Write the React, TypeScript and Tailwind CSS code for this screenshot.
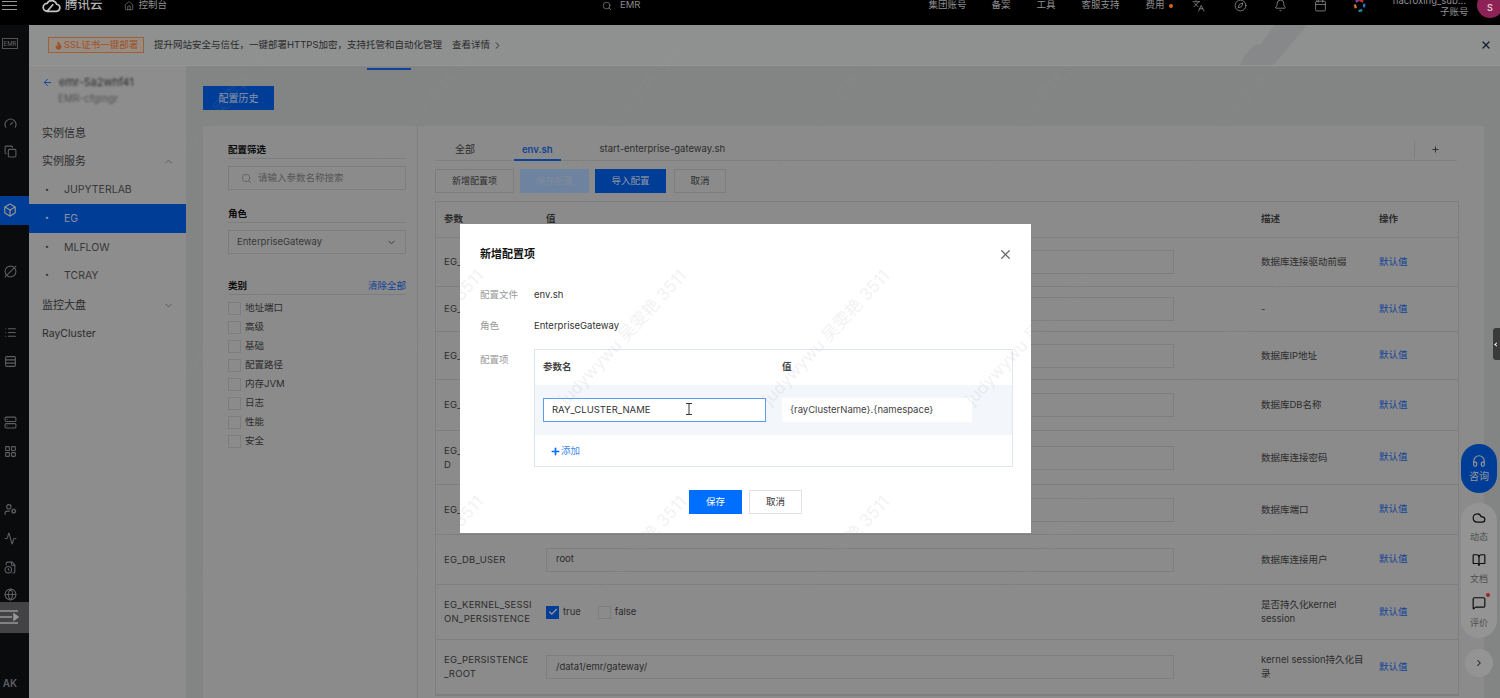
import {
  Activity,
  ArrowLeft,
  BookOpen,
  Bell,
  Box,
  Calendar,
  Check,
  ChevronDown,
  ChevronRight,
  ChevronUp,
  CircleSlash2,
  Cloud,
  Compass,
  Copy,
  FileClock,
  Flame,
  Gauge,
  Globe,
  Headphones,
  Home,
  Languages,
  LayoutGrid,
  List,
  MessageSquare,
  Plus,
  Rows3,
  Search,
  Server,
  UserCog,
  X,
} from 'lucide-react';

const FONT = 'font-["Inter","Noto_Sans_CJK_SC",sans-serif]';

const NAV_TOP = [
  { label: '集团账号', cls: 'ml-[288px]' },
  { label: '备案', cls: 'ml-[25px]' },
  { label: '工具', cls: 'ml-[26px]' },
  { label: '客服支持', cls: 'ml-[26px]' },
  { label: '费用', cls: 'ml-[26px]' },
];

const CATEGORIES = ['地址端口', '高级', '基础', '配置路径', '内存JVM', '日志', '性能', '安全'];

const ROWS = [
  { name: 'EG_DB_PREFIX', value: '', desc: '数据库连接驱动前缀', cls: 'h-[49px]' },
  { name: 'EG_DB_OPTIONS', value: '', desc: '-', cls: 'h-[45px]' },
  { name: 'EG_DB_HOST', value: '', desc: '数据库IP地址', cls: 'h-[48px]' },
  { name: 'EG_DB_NAME', value: '', desc: '数据库DB名称', cls: 'h-[51px]' },
  { name: 'EG_DB_PASSWORD', value: '', desc: '数据库连接密码', cls: 'h-[54px]' },
  { name: 'EG_DB_PORT', value: '', desc: '数据库端口', cls: 'h-[50px]' },
  { name: 'EG_DB_USER', value: 'root', desc: '数据库连接用户', cls: 'h-[50px]' },
  { name: 'EG_KERNEL_SESSION_PERSISTENCE', value: 'check', desc: '是否持久化kernel session', cls: 'h-[55px]' },
  { name: 'EG_PERSISTENCE_ROOT', value: '/data1/emr/gateway/', desc: 'kernel session持久化目录', cls: 'h-[55px]' },
];

const WATERMARKS = [99, 325, 551].flatMap((y) =>
  [129, 332, 535, 738, 941, 1144].map((x) => ({ x, y })),
);

const RailIcon = ({ children, cls }: { children: React.ReactNode; cls: string }) => (
  <div className={`flex items-center justify-center w-full pr-[9px] text-[#85888d] ${cls}`}>{children}</div>
);

const TopBar = () => (
  <header className="h-[25px] shrink-0 bg-black overflow-hidden text-[#8f8f8f] text-[9.5px]">
    <div className="flex items-center h-[11px] relative">
      <div className="w-[41px] pl-[2px] flex flex-col gap-[3px]">
        <span className="block w-[15px] h-[1px] bg-[#999]" />
        <span className="block w-[15px] h-[1px] bg-[#999]" />
        <span className="block w-[15px] h-[1px] bg-[#999]" />
      </div>
      <svg viewBox="0 0 24 16" className="w-[21px] h-[14px] text-[#c4c4c4]" fill="none" stroke="currentColor" strokeWidth="2">
        <path d="M7 14h10a4 4 0 0 0 1-8 6 6 0 0 0-11-1 4.500 4.500 0 0 0 0 9zM7 14l7-8" />
      </svg>
      <span className="ml-[3px] text-[12.5px] font-medium text-[#b4b4b4]">腾讯云</span>
      <Home className="ml-[21px] w-[10px] h-[10px]" strokeWidth={1.5} />
      <span className="ml-[5px]">控制台</span>
      <Search className="ml-[435px] w-[10px] h-[10px] text-[#777]" />
      <span className="ml-[8px] text-[#8a8a8a]">EMR</span>
      {NAV_TOP.map((item) => (
        <span key={item.label} className={item.cls}>
          {item.label}
        </span>
      ))}
      <span className="ml-[4px] w-[4px] h-[4px] rounded-full bg-[#d8641a]" />
      <Languages className="ml-[19px] w-[13px] h-[13px]" strokeWidth={1.5} />
      <Compass className="ml-[29px] w-[13px] h-[13px]" strokeWidth={1.5} />
      <Bell className="ml-[27px] w-[13px] h-[13px]" strokeWidth={1.5} />
      <Calendar className="ml-[27px] w-[13px] h-[13px]" strokeWidth={1.5} />
      <svg viewBox="0 0 14 14" className="ml-[26px] w-[13px] h-[13px]" fill="none" strokeWidth="2.500">
        <path d="M7 1l4 2" stroke="#c0392b" />
        <path d="M12 5l0 4" stroke="#2f6fd0" />
        <path d="M10 12l-4 1" stroke="#1f8fb0" />
        <path d="M3 10L2 6" stroke="#d07a2a" />
        <path d="M3 3l3-2" stroke="#8a3fa8" />
      </svg>
      <span className="absolute left-[1390px] -top-[6px] text-[9.5px] w-[76px] text-right">hacroxing_sub...</span>
      <span className="absolute left-[1440px] top-[5px] text-[9.5px]">子账号</span>
      <span className="absolute left-[1477px] -top-[8px] w-[26px] h-[26px] rounded-full bg-[#8c2256] flex items-center justify-center text-[9px] font-semibold text-[#e5c7d4] pt-[5px]">
        S
      </span>
    </div>
  </header>
);

const Rail = () => (
  <aside className="w-[29px] shrink-0 bg-[#0f1013] flex flex-col">
    <RailIcon cls="h-[38px]">
      <span className="border border-[#777] text-[6px] leading-[9px] px-[1px] text-[#999]">EMR</span>
    </RailIcon>
    <RailIcon cls="mt-[46px] h-[29px]"><Gauge size={13} /></RailIcon>
    <RailIcon cls="h-[29px]"><Copy size={13} /></RailIcon>
    <RailIcon cls="mt-[30px] h-[29px] bg-[#0058d8] text-[#d6d6d6]"><Box size={14} /></RailIcon>
    <RailIcon cls="mt-[32px] h-[29px]"><CircleSlash2 size={13} /></RailIcon>
    <RailIcon cls="mt-[33px] h-[29px]"><List size={13} /></RailIcon>
    <RailIcon cls="h-[29px]"><Rows3 size={13} /></RailIcon>
    <RailIcon cls="mt-[32px] h-[29px]"><Server size={13} /></RailIcon>
    <RailIcon cls="h-[29px]"><LayoutGrid size={13} /></RailIcon>
    <RailIcon cls="mt-[30px] h-[29px]"><UserCog size={13} /></RailIcon>
    <RailIcon cls="h-[29px]"><Activity size={13} /></RailIcon>
    <RailIcon cls="h-[29px]"><FileClock size={13} /></RailIcon>
    <RailIcon cls="h-[20px] pt-[6px]"><Globe size={13} /></RailIcon>
    <div className="h-[32px] bg-[#616165] text-[#d8d8d8] flex items-center">
      <svg viewBox="0 0 20 16" className="w-[20px] h-[16px]" fill="none" stroke="currentColor" strokeWidth="1.5">
        <path d="M0 2h18M0 8h12M0 14h18" />
        <path d="M14 5l4 3-4 3z" fill="currentColor" />
      </svg>
    </div>
    <RailIcon cls="mt-[36px] h-[29px] text-[10px] font-semibold">AK</RailIcon>
  </aside>
);

const Banner = () => (
  <div className="h-[41px] shrink-0 bg-[#cdcecf] border-b border-[#d6d6d7] relative overflow-hidden flex items-center pl-[19px] text-[9.5px] text-[#3c3c3c]">
    <span className="h-[16px] w-[96px] border border-[#e08a55] bg-[#dccabc] text-[#e0783c] flex items-center justify-center gap-[1px]">
      <Flame size={9} fill="currentColor" />
      SSL证书一键部署
    </span>
    <span className="ml-[10px]">提升网站安全与信任，一键部署HTTPS加密，支持托管和自动化管理</span>
    <span className="ml-[10px]">查看详情</span>
    <ChevronRight className="ml-[2px]" size={11} />
    <svg viewBox="0 0 120 41" className="absolute left-[1180px] top-0 w-[120px] h-[41px] text-[#c2c3c5]" fill="currentColor">
      <path d="M30 41q10-20 20-22q6 8 2 22z" />
      <path d="M36 41 66 0h32L64 41z" />
    </svg>
    <X className="absolute right-[8px] top-[14px] text-[#1c2b45]" size={12} strokeWidth={2.5} />
  </div>
);

const SubItem = ({ label }: { label: string }) => (
  <>
    <span className="w-[22px] pl-[3px] text-[7px]">•</span>
    {label}
  </>
);

const Sidebar = () => (
  <nav className="w-[157px] shrink-0 bg-[#cbcbcc] text-[10.5px] text-[#404040] pl-[13px]">
    <div className="flex items-center gap-[6px] h-[20px] mt-[6px] text-[#1560d8]">
      <ArrowLeft size={11} />
      <span className="blur-[1.2px] text-[#404040] text-[11px]">emr-5a2whf41</span>
    </div>
    <div className="h-[12px] ml-[16px] blur-[1.2px] text-[#707070] text-[10px] leading-[12px]">EMR-cfgmgr</div>
    <div className="h-[29px] mt-[14px] pt-[2px] flex items-center text-[11px]">实例信息</div>
    <div className="h-[28px] pt-[1px] flex items-center justify-between pr-[12px] text-[11px]">
      实例服务
      <ChevronUp size={11} className="text-[#777]" />
    </div>
    <div className="h-[29px] pt-[1px] flex items-center text-[#505050]">
      <SubItem label="JUPYTERLAB" />
    </div>
    <div className="h-[29px] -ml-[13px] pl-[13px] bg-[#0058d8] flex items-center text-[#c8d4e8]">
      <SubItem label="EG" />
    </div>
    <div className="h-[28px] pt-[1px] flex items-center text-[#505050]">
      <SubItem label="MLFLOW" />
    </div>
    <div className="h-[29px] flex items-center text-[#505050]">
      <SubItem label="TCRAY" />
    </div>
    <div className="h-[29px] pt-[1px] flex items-center justify-between pr-[12px] text-[11px]">
      监控大盘
      <ChevronDown size={11} className="text-[#777]" />
    </div>
    <div className="h-[29px] flex items-center">RayCluster</div>
  </nav>
);

const FilterColumn = () => (
  <div className="w-[215px] shrink-0 border-r border-[#b6b7b9] pl-[25px] pr-[11px] pt-[16px] text-[9.5px] text-[#404040]">
    <div className="h-[17px] border-b border-[#b2b3b5] font-semibold text-[#101010] leading-[16px]">配置筛选</div>
    <div className="mt-[7px] h-[24px] border border-[#b2b3b5] flex items-center pl-[12px] text-[#7c7c7c]">
      <Search size={11} strokeWidth={1.5} />
      <span className="ml-[6px]">请输入参数名称搜索</span>
    </div>
    <div className="mt-[16px] h-[17px] border-b border-[#b2b3b5] font-semibold text-[#101010] leading-[16px]">角色</div>
    <div className="mt-[7px] h-[24px] border border-[#b2b3b5] flex items-center justify-between px-[8px] text-[#505050]">
      EnterpriseGateway
      <ChevronDown size={11} strokeWidth={2} />
    </div>
    <div className="mt-[25px] h-[16px] border-b border-[#b2b3b5] flex justify-between leading-[14px]">
      <span className="font-semibold text-[#101010]">类别</span>
      <span className="text-[#1560d8]">清除全部</span>
    </div>
    <div className="mt-[4px] flex flex-col">
      {CATEGORIES.map((cat) => (
        <label key={cat} className="h-[19px] flex items-center gap-[4px]">
          <span className="w-[13px] h-[13px] border border-[#b2b3b5] bg-[#c8c8c8]" />
          {cat}
        </label>
      ))}
    </div>
  </div>
);

const ConfigTable = () => (
  <div className="mt-[8px] border border-[#b6b7b9] text-[9.5px] text-[#404040]">
    <div className="h-[36px] flex items-center border-b border-[#b6b7b9] font-semibold">
      <span className="w-[110px] pl-[8px]">参数</span>
      <span className="w-[715px]">值</span>
      <span className="w-[118px]">描述</span>
      <span>操作</span>
    </div>
    {ROWS.map((row) => (
      <div key={row.name} className={`flex items-center border-b border-[#b6b7b9] ${row.cls}`}>
        <span className="w-[110px] pl-[8px] pr-[13px] break-all leading-[14px] tracking-[0.2px]">{row.name}</span>
        <div className="w-[715px]">
          {row.value === 'check' ? (
            <div className="flex items-center gap-[4px]">
              <span className="w-[13px] h-[13px] bg-[#0058d8] flex items-center justify-center text-[#e0e0e0]">
                <Check size={10} strokeWidth={3} />
              </span>
              true
              <span className="ml-[13px] w-[13px] h-[13px] border border-[#b2b3b5]" />
              false
            </div>
          ) : (
            <div className="w-[628px] h-[24px] border border-[#b6b7b9] flex items-center pl-[9px]">{row.value}</div>
          )}
        </div>
        <span className="w-[118px] pr-[14px] leading-[14px]">{row.desc}</span>
        <span className="text-[#1560d8]">默认值</span>
      </div>
    ))}
  </div>
);

const ConfigColumn = () => (
  <div className="flex-1 min-w-0 pl-[17px] pr-[25px] pt-[12px] text-[9.5px] text-[#404040]">
    <div className="h-[23px] mr-[2px] border-b border-[#b6b7b9] flex items-center">
      <span className="ml-[20px] text-[10px]">全部</span>
      <span className="ml-[39px] font-semibold text-[#1560d8] h-[23px] leading-[24px] px-[8px] border-b-2 border-[#1560d8]">
        env.sh
      </span>
      <span className="ml-[39px]">start-enterprise-gateway.sh</span>
      <span className="ml-auto h-[18px] border-l border-[#b6b7b9] w-[43px] flex items-center pl-[16px]">
        <Plus size={9} strokeWidth={2.5} />
      </span>
    </div>
    <div className="mt-[8px] flex items-center h-[24px]">
      <span className="w-[79px] h-full border border-[#b2b3b5] bg-[#c8c8c8] flex items-center justify-center text-[9px]">新增配置项</span>
      <span className="ml-[6px] w-[69px] h-full bg-[#9dbce6] text-[#b6c6dc] flex items-center justify-center">保存配置</span>
      <span className="ml-[6px] w-[71px] h-full bg-[#0058d8] text-[#c8d4e8] flex items-center justify-center">导入配置</span>
      <span className="ml-[8px] w-[52px] h-full border border-[#b2b3b5] bg-[#c8c8c8] flex items-center justify-center">取消</span>
    </div>
    <ConfigTable />
  </div>
);

const FloatDock = () => (
  <div className="absolute left-[1461px] top-[444px] w-[36px] flex flex-col items-center text-[9px]">
    <div className="w-[36px] h-[49px] rounded-full bg-[#0058d8] text-[#d8d8d8] flex flex-col items-center justify-center gap-[1px]">
      <Headphones size={14} />
      <span className="text-[10px]">咨询</span>
    </div>
    <div className="mt-[10px] w-[36px] h-[135px] rounded-[18px] bg-[#d4d5d6] flex flex-col items-center pt-[8px] text-[#707070]">
      <div className="h-[44px] flex flex-col items-center gap-[5px]">
        <Cloud size={14} className="text-[#111]" />
        动态
      </div>
      <div className="h-[44px] flex flex-col items-center gap-[5px]">
        <BookOpen size={14} className="text-[#111]" />
        文档
      </div>
      <div className="relative h-[44px] flex flex-col items-center gap-[6px]">
        <MessageSquare size={14} className="text-[#111]" />
        <span className="absolute -right-[2px] -top-[3px] w-[4px] h-[4px] rounded-full bg-[#e83030]" />
        评价
      </div>
    </div>
    <div className="mt-[11px] w-[28px] h-[28px] rounded-full bg-[#d4d5d6] flex items-center justify-center text-[#222]">
      <ChevronRight size={10} strokeWidth={2.5} />
    </div>
  </div>
);

const AddConfigModal = () => (
  <div className="absolute left-[460px] top-[224px] w-[571px] h-[309px] bg-white pl-[20px] pr-[18px] pt-[22px] text-[9.5px] text-[#333]">
    <div className="flex items-center justify-between h-[16px] text-[11px] font-semibold text-[#111]">
      新增配置项
      <X size={15} className="text-[#666]" />
    </div>
    <div className="mt-[26px] flex h-[14px] items-center">
      <span className="w-[54px] text-[#999]">配置文件</span>
      <span>env.sh</span>
    </div>
    <div className="mt-[17px] flex h-[14px] items-center">
      <span className="w-[54px] text-[#999]">角色</span>
      <span>EnterpriseGateway</span>
    </div>
    <div className="mt-[16px] flex">
      <span className="w-[54px] pt-[4px] text-[#999]">配置项</span>
      <div className="w-[479px] h-[118px] border border-[#dfe5ee]">
        <div className="h-[35px] flex items-center font-semibold text-[#444]">
          <span className="w-[247px] pl-[8px]">参数名</span>
          <span>值</span>
        </div>
        <div className="h-[50px] bg-[#f3f6fb] flex items-center pl-[8px]">
          <div className="relative w-[223px] h-[24px] border-[1.5px] border-[#5b9bf0] bg-white flex items-center pl-[8px]">
            RAY_CLUSTER_NAME
            <svg viewBox="0 0 6 12" className="absolute left-[142px] top-[4px] w-[6px] h-[12px]" fill="none" stroke="#333" strokeWidth="1">
              <path d="M0 .5h6M3 .5v11M0 11.500h6" />
            </svg>
          </div>
          <div className="ml-[16px] w-[190px] h-[24px] bg-white flex items-center pl-[8px] text-[#444]">
            {'{rayClusterName}.{namespace}'}
          </div>
        </div>
        <div className="h-[31px] pt-[1px] flex items-center pl-[15px] text-[#006eff]">
          <Plus size={11} strokeWidth={3.5} />
          <span className="text-[#3d8bf0]">添加</span>
        </div>
      </div>
    </div>
    <div className="mt-[23px] flex justify-center gap-[7px] pr-[2px]">
      <span className="w-[53px] h-[24px] bg-[#006eff] text-white flex items-center justify-center">保存</span>
      <span className="w-[53px] h-[24px] border border-[#dfe3e8] flex items-center justify-center">取消</span>
    </div>
  </div>
);

export default function App() {
  return (
    <div className={`relative w-[1500px] h-[698px] overflow-hidden bg-[#bcbdbe] flex flex-col ${FONT}`}>
      <TopBar />
      <div className="flex flex-1 min-h-0">
        <Rail />
        <div className="flex-1 min-w-0 flex flex-col">
          <Banner />
          <div className="flex flex-1 min-h-0 relative">
            <div className="absolute left-[338px] top-[2px] w-[44px] h-[2px] bg-[#1560d8]" />
            <Sidebar />
            <main className="flex-1 min-w-0 pl-[17px] pr-[16px] pt-[20px]">
              <span className="w-[71px] h-[24px] bg-[#0058d8] text-[#c8d4e8] text-[10px] flex items-center justify-center">
                配置历史
              </span>
              <div className="mt-[16px] flex h-[600px] bg-[#c8c8c8]">
                <FilterColumn />
                <ConfigColumn />
              </div>
            </main>
          </div>
        </div>
      </div>
      <FloatDock />
      {/* dim layer under the dialog */}
      <div className="absolute inset-x-0 top-[25px] bottom-0 bg-black/30" />
      <div className="absolute right-0 top-[328px] w-[7px] h-[32px] bg-[#3a3a3a] rounded-l-[3px] flex items-center justify-center">
        <span className="w-[3px] h-[3px] border-l border-b border-white rotate-45" />
      </div>
      <AddConfigModal />
      <div className="absolute inset-0 overflow-hidden pointer-events-none">
        {WATERMARKS.map((mark) => (
          <span
            key={`${mark.x}-${mark.y}`}
            className="absolute -rotate-[47deg] whitespace-nowrap text-[17px] text-[#9a9a9a]/15"
            style={{ left: mark.x, top: mark.y }}
          >
            judywywu 吴雯艳 3511
          </span>
        ))}
      </div>
    </div>
  );
}
